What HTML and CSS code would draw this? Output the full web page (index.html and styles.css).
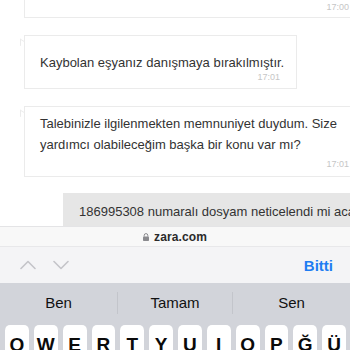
FILE: index.html
```html
<!DOCTYPE html>
<html lang="tr">

<head>
    <meta charset="UTF-8">
    <meta name="viewport" content="width=device-width,initial-scale=1" />
    <title>Zara Chat</title>
    <link rel="stylesheet" href="styles.css">
</head>

<body>
    <section class="chat">
        <div class="bubble agent first">
            <p class="time">17:00</p>
        </div>
        <div class="bubble agent short">
            <p class="msg">Kaybolan eşyanız danışmaya bırakılmıştır.</p>
            <p class="time">17:01</p>
        </div>
        <div class="bubble agent long">
            <p class="msg">Talebinizle ilgilenmekten memnuniyet duydum. Size yardımcı olabileceğim başka bir konu var mı?</p>
            <p class="time">17:01</p>
        </div>
        <div class="bubble mine">
            <p class="msg">186995308 numaralı dosyam neticelendi mi acaba?</p>
        </div>
    </section>

    <section class="urlbar">
        <svg class="lock" width="6" height="8" viewBox="0 0 6 8">
            <path d="M1.2 3.6V2.4a1.8 1.8 0 0 1 3.6 0v1.2" fill="none" stroke="#8a8a8e" stroke-width="1" />
            <rect x="0" y="3.4" width="6" height="4.6" rx="0.8" fill="#8a8a8e" />
        </svg>
        <span>zara.com</span>
    </section>

    <section class="toolbar">
        <div class="arrows">
            <svg width="16" height="10" viewBox="0 0 16 10">
                <path d="M1 8.5L8 1.5L15 8.5" fill="none" stroke="#c4c4c8" stroke-width="1.6" stroke-linecap="round" stroke-linejoin="round" />
            </svg>
            <svg width="16" height="10" viewBox="0 0 16 10">
                <path d="M1 1.5L8 8.5L15 1.5" fill="none" stroke="#c4c4c8" stroke-width="1.6" stroke-linecap="round" stroke-linejoin="round" />
            </svg>
        </div>
        <span class="done">Bitti</span>
    </section>

    <section class="keyboard">
        <div class="suggestions">
            <span>Ben</span>
            <span>Tamam</span>
            <span>Sen</span>
        </div>
        <div class="keys">
            <span>Q</span><span>W</span><span>E</span><span>R</span><span>T</span><span>Y</span>
            <span>U</span><span>I</span><span>O</span><span>P</span><span>Ğ</span><span>Ü</span>
        </div>
    </section>
</body>

</html>
```

FILE: styles.css
```css
html,
body {
    margin: 0;
    padding: 0;
}

body {
    width: 350px;
    height: 350px;
    overflow: hidden;
    font-family: "Liberation Sans", Arial, sans-serif;
    background: #ffffff;
}

p {
    margin: 0;
}

.chat {
    height: 226px;
    overflow: hidden;
    padding-left: 24px;
    display: flex;
    flex-direction: column;
    border-bottom: 1px solid #e4e4e6;
}

.bubble {
    position: relative;
    border: 1px solid #ebebeb;
    background: #fff;
    box-sizing: border-box;
}

.agent::before {
    /* little tail on the left */
    content: "";
    position: absolute;
    left: -5px;
    top: 4px;
    width: 4px;
    height: 6px;
    border-left: 1px solid #ececec;
    border-top: 1px solid #ececec;
    transform: skewY(30deg);
}

.msg {
    font-size: 13px;
    line-height: 21px;
    color: #333;
    white-space: nowrap;
}

.long .msg {
    white-space: normal;
}

.time {
    font-size: 9px;
    line-height: 11px;
    color: #c6c6c6;
    text-align: right;
}

.first {
    margin-top: -20px;
    height: 42px;
    width: 340px;
    padding: 21px 14px 0 0;
}

.short {
    margin-top: 17px;
    width: 273px;
    padding: 16px 16px 5px 15px;
}

.short .time {
    margin-top: -1px;
}

.long {
    margin-top: 17px;
    width: 340px;
    padding: 6px 14px 6px 15px;
}

.long .msg {
    width: 300px;
}

.long .time {
    margin-top: 4px;
}

.mine {
    margin-top: 16px;
    margin-left: 39px;
    width: 320px;
    background: #e6e6e6;
    border-color: #e6e6e6;
    padding: 7px 0 0 15px;
    height: 40px;
}

.urlbar {
    height: 19px;
    background: #f8f8f8;
    display: flex;
    align-items: center;
    justify-content: center;
    gap: 5px;
    font-size: 12px;
    font-weight: bold;
    color: #2b2b2b;
    letter-spacing: 0.1px;
}

.toolbar {
    height: 36px;
    background: #f4f4f6;
    border-top: 1px solid #e8e8ea;
    display: flex;
    align-items: center;
    justify-content: space-between;
    padding: 0 17px 0 20px;
}

.arrows {
    display: flex;
    gap: 17px;
    align-items: center;
}

.done {
    font-size: 15px;
    font-weight: bold;
    color: #1e7cf2;
}

.keyboard {
    background: #d2d4da;
    height: 70px;
}

.suggestions {
    height: 40px;
    display: grid;
    grid-template-columns: 117px 115px 118px;
    align-items: center;
}

.suggestions span {
    text-align: center;
    font-size: 15px;
    color: #111;
    border-left: 1px solid #c3c5cb;
    line-height: 22px;
}

.suggestions span:first-child {
    border-left: none;
}

.keys {
    display: grid;
    grid-template-columns: repeat(12, 1fr);
    gap: 5px;
    padding: 2px 4px 0 5px;
}

.keys span {
    height: 40px;
    background: #fff;
    border-radius: 5px;
    box-shadow: 0 1px 0 #888a8e;
    font-size: 19px;
    font-weight: bold;
    color: #0a0a0a;
    text-align: center;
    line-height: 40px;
}
```
